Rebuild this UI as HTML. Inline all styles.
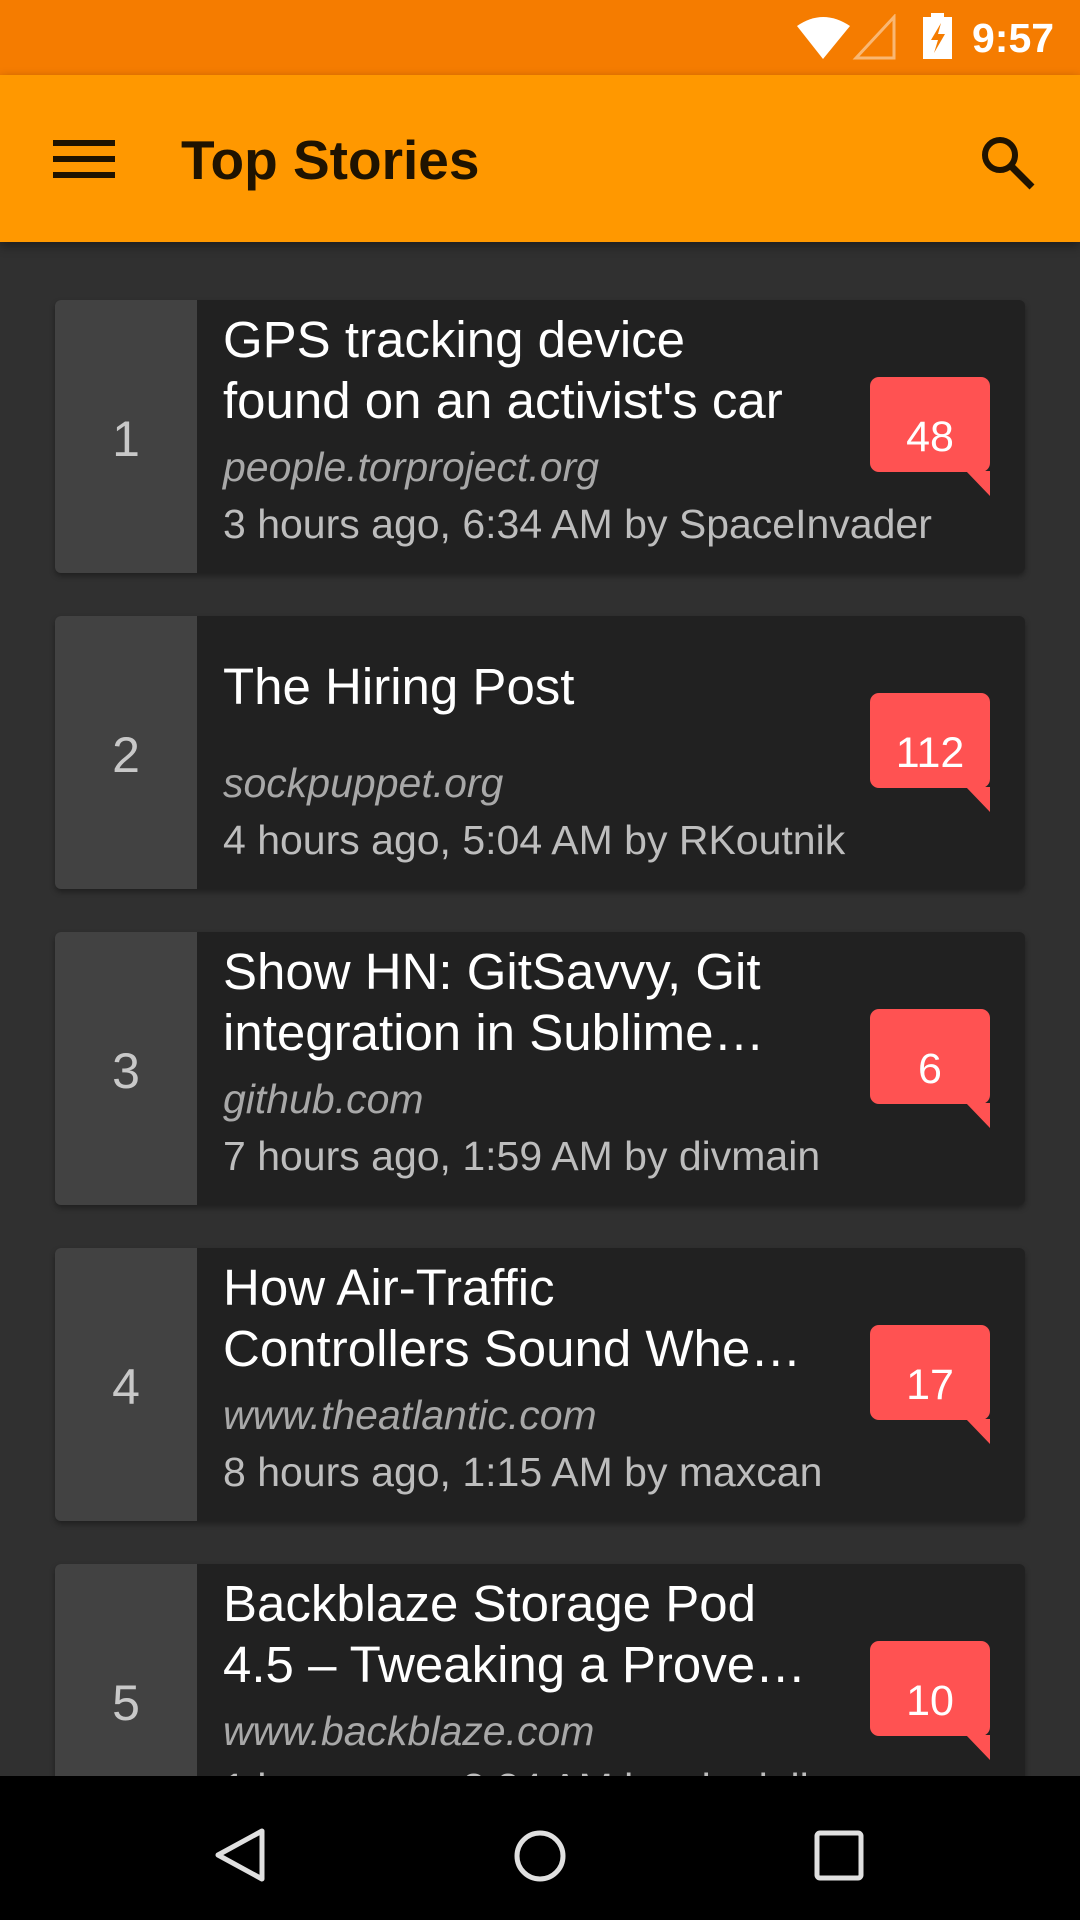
<!DOCTYPE html>
<html><head><meta charset="utf-8"><style>
*{margin:0;padding:0;box-sizing:border-box}
body{width:1080px;height:1920px;background:#303030;font-family:"Liberation Sans",sans-serif;position:relative;overflow:hidden}
.status{position:absolute;left:0;top:0;width:1080px;height:75px;background:#f57c00}
.bar{position:absolute;left:0;top:75px;width:1080px;height:167px;background:#ff9800;box-shadow:0 4px 10px rgba(0,0,0,.4);z-index:2}
.title{position:absolute;left:181px;top:2px;line-height:167px;font-size:55px;font-weight:bold;color:#1f1300}
.card{position:absolute;left:55px;width:970px;height:273px;background:#212121;border-radius:6px;overflow:hidden;box-shadow:0 3px 6px rgba(0,0,0,.35)}
.num{position:absolute;left:0;top:0;width:142px;height:100%;background:#424242;color:#c8c8c8;font-size:50px;display:flex;align-items:center;justify-content:center;padding-top:4px}
.t{position:absolute;left:168px;top:9px;width:680px;height:122px;display:flex;align-items:center;color:#fff;font-size:51px;line-height:61px}
.t span{display:block;white-space:nowrap}
.d{position:absolute;left:168px;top:142px;font-size:41px;font-style:italic;color:#a8a8a8;line-height:50px}
.m{position:absolute;left:168px;top:199px;font-size:41px;color:#bdbdbd;line-height:50px;white-space:nowrap}
.b{position:absolute;left:815px;top:77px;width:120px;height:95px;background:#ff5252;border-radius:9px;color:#fff;font-size:43px;display:flex;align-items:center;justify-content:center;padding-top:26px}
.b:after{content:"";position:absolute;right:0;top:94px;border-left:24px solid transparent;border-top:25px solid #ff5252}
.nav{position:absolute;left:0;top:1776px;width:1080px;height:144px;background:#000}
</style></head><body>
<div class="status">
<svg style="position:absolute;left:795px;top:14px" width="110" height="46" viewBox="0 0 110 46">
<path d="M2 12 Q28 -6 55 12 L28 45 Z" fill="#fff"/>
<path d="M99 3 L99 44 L61 44 Z" fill="none" stroke="rgba(255,255,255,.45)" stroke-width="3"/>
</svg>
<svg style="position:absolute;left:922px;top:13px" width="32" height="46" viewBox="0 0 32 46">
<rect x="9" y="0" width="13" height="5" fill="#fff"/><rect x="1" y="4" width="29" height="42" fill="#fff"/>
<path d="M19 10 L9 27 L16 27 L12 40 L23 21 L16 21 Z" fill="#f57c00"/>
</svg>
<div style="position:absolute;left:972px;top:14px;font-size:41px;font-weight:bold;color:#fff;line-height:48px">9:57</div>
</div>
<div class="bar">
<div style="position:absolute;left:53px;top:65px;width:62px;height:6px;background:#1f1300;box-shadow:0 16px 0 #1f1300,0 32px 0 #1f1300"></div>
<div class="title">Top Stories</div>
<svg style="position:absolute;left:978px;top:58px" width="58" height="58" viewBox="0 0 58 58"><circle cx="22" cy="22" r="15" fill="none" stroke="#1f1300" stroke-width="6"/><path d="M33 33 L54 54" stroke="#1f1300" stroke-width="7"/></svg>
</div>

<div class="card" style="top:300px"><div class="num">1</div><div class="t"><span>GPS tracking device<br>found on an activist's car</span></div><div class="d">people.torproject.org</div><div class="m">3 hours ago, 6:34 AM by SpaceInvader</div><div class="b">48</div></div>
<div class="card" style="top:616px"><div class="num">2</div><div class="t"><span>The Hiring Post</span></div><div class="d">sockpuppet.org</div><div class="m">4 hours ago, 5:04 AM by RKoutnik</div><div class="b">112</div></div>
<div class="card" style="top:932px"><div class="num">3</div><div class="t"><span>Show HN: GitSavvy, Git<br>integration in Sublime…</span></div><div class="d">github.com</div><div class="m">7 hours ago, 1:59 AM by divmain</div><div class="b">6</div></div>
<div class="card" style="top:1248px"><div class="num">4</div><div class="t"><span>How Air-Traffic<br>Controllers Sound Whe…</span></div><div class="d">www.theatlantic.com</div><div class="m">8 hours ago, 1:15 AM by maxcan</div><div class="b">17</div></div>
<div class="card" style="top:1564px"><div class="num">5</div><div class="t"><span>Backblaze Storage Pod<br>4.5 – Tweaking a Prove…</span></div><div class="d">www.backblaze.com</div><div class="m">1 hours ago, 8:24 AM by abcdell</div><div class="b">10</div></div>

<div class="nav">
<svg style="position:absolute;left:210px;top:50px" width="60" height="60" viewBox="0 0 60 60"><path d="M52 5 L52 53 L8 29 Z" fill="none" stroke="#e0e0e0" stroke-width="5" stroke-linejoin="round"/></svg>
<svg style="position:absolute;left:510px;top:50px" width="60" height="60" viewBox="0 0 60 60"><circle cx="30" cy="30" r="23" fill="none" stroke="#e0e0e0" stroke-width="5"/></svg>
<svg style="position:absolute;left:812px;top:52px" width="56" height="56" viewBox="0 0 56 56"><rect x="5" y="5" width="44" height="45" rx="3" fill="none" stroke="#e0e0e0" stroke-width="5"/></svg>
</div>
</body></html>
